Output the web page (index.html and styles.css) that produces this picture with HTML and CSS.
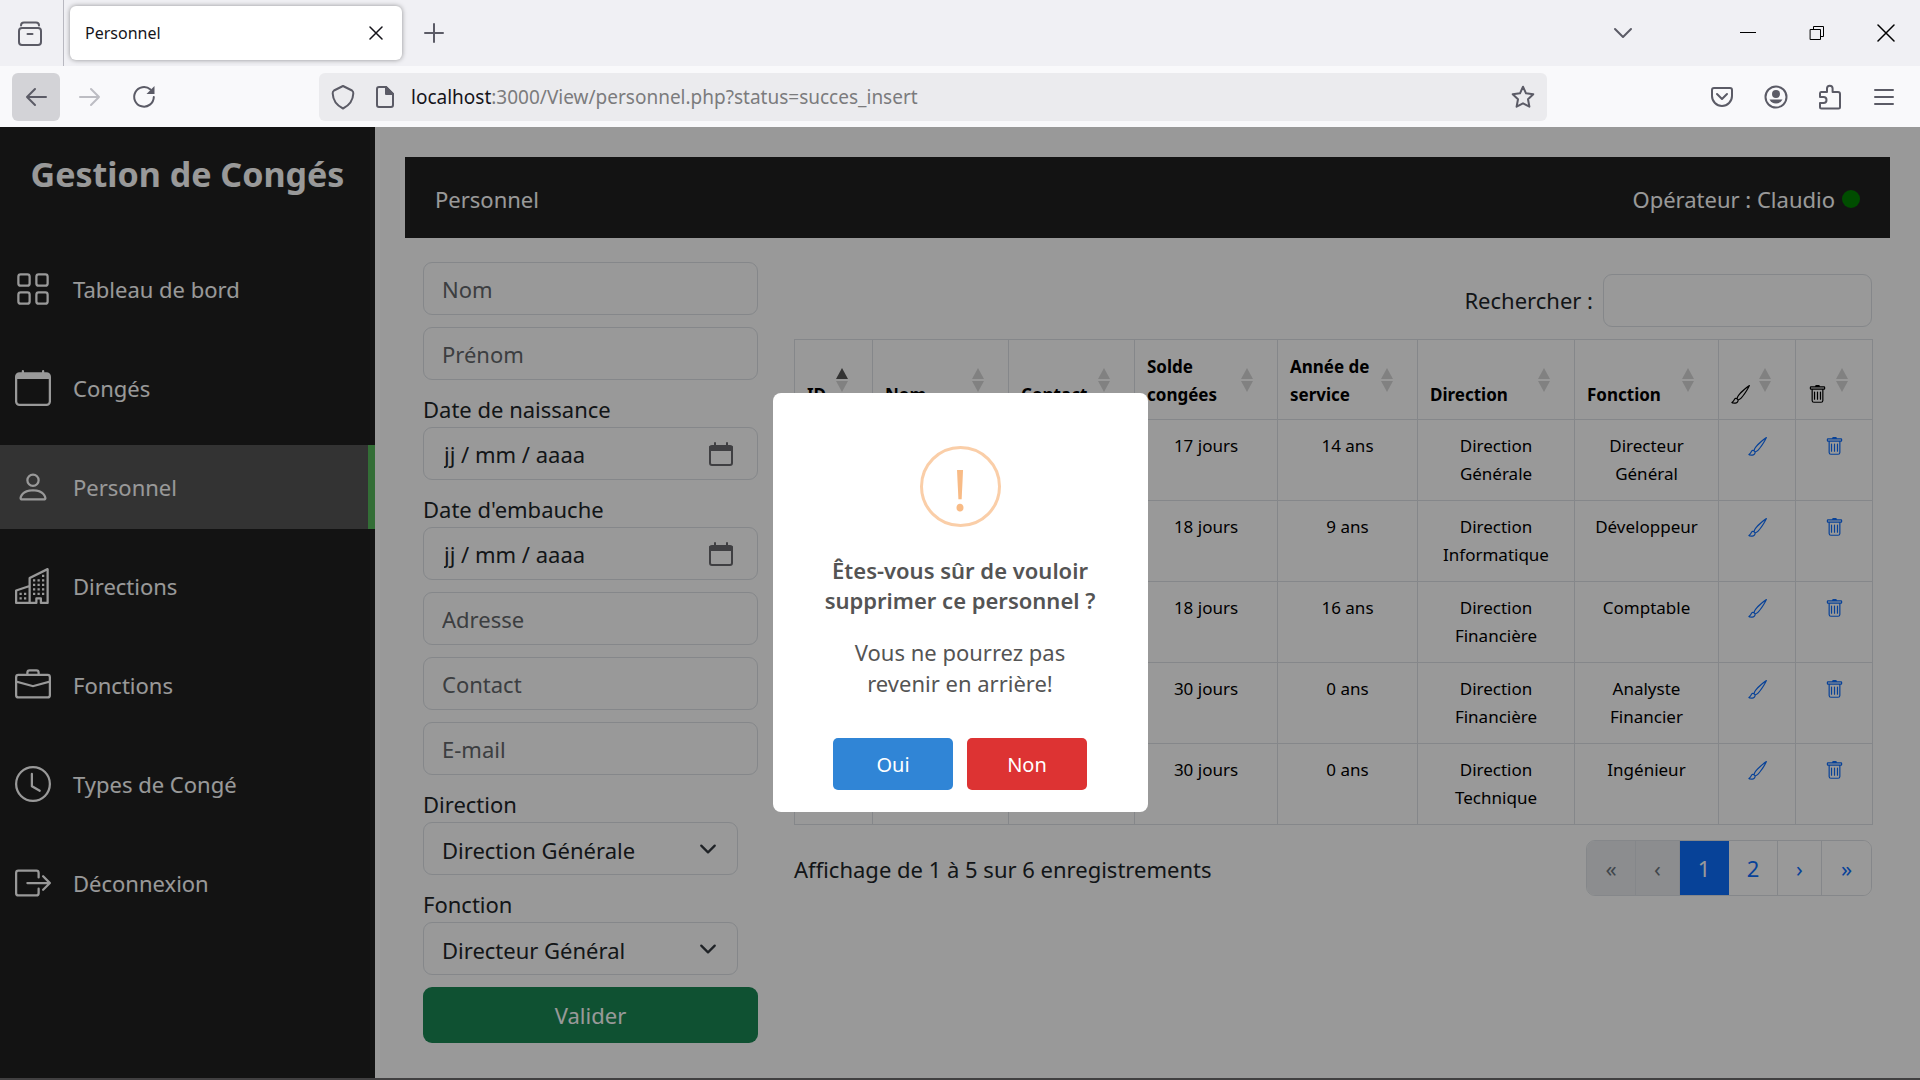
FILE: index.html
```html
<!DOCTYPE html>
<html lang="fr">
<head>
<meta charset="utf-8">
<meta name="viewport" content="width=device-width, initial-scale=1">
<title>Personnel</title>
<link rel="stylesheet" href="styles.css">
</head>
<body>
<svg class="sprite" aria-hidden="true">
  <symbol id="grid" viewBox="0 0 16 16"><path d="M1 2.5A1.5 1.5 0 0 1 2.5 1h3A1.5 1.5 0 0 1 7 2.5v3A1.5 1.5 0 0 1 5.5 7h-3A1.5 1.5 0 0 1 1 5.5zM2.5 2a.5.5 0 0 0-.5.5v3a.5.5 0 0 0 .5.5h3a.5.5 0 0 0 .5-.5v-3a.5.5 0 0 0-.5-.5zm6.5.5A1.5 1.5 0 0 1 10.5 1h3A1.5 1.5 0 0 1 15 2.5v3A1.5 1.5 0 0 1 13.5 7h-3A1.5 1.5 0 0 1 9 5.5zm1.5-.5a.5.5 0 0 0-.5.5v3a.5.5 0 0 0 .5.5h3a.5.5 0 0 0 .5-.5v-3a.5.5 0 0 0-.5-.5zM1 10.5A1.5 1.5 0 0 1 2.5 9h3A1.5 1.5 0 0 1 7 10.5v3A1.5 1.5 0 0 1 5.5 15h-3A1.5 1.5 0 0 1 1 13.5zm1.5-.5a.5.5 0 0 0-.5.5v3a.5.5 0 0 0 .5.5h3a.5.5 0 0 0 .5-.5v-3a.5.5 0 0 0-.5-.5zm6.5.5A1.5 1.5 0 0 1 10.5 9h3a1.5 1.5 0 0 1 1.5 1.5v3a1.5 1.5 0 0 1-1.5 1.5h-3A1.5 1.5 0 0 1 9 13.5zm1.5-.5a.5.5 0 0 0-.5.5v3a.5.5 0 0 0 .5.5h3a.5.5 0 0 0 .5-.5v-3a.5.5 0 0 0-.5-.5z"/></symbol>
  <symbol id="calendar" viewBox="0 0 16 16"><path d="M3.5 0a.5.5 0 0 1 .5.5V1h8V.5a.5.5 0 0 1 1 0V1h1a2 2 0 0 1 2 2v11a2 2 0 0 1-2 2H2a2 2 0 0 1-2-2V3a2 2 0 0 1 2-2h1V.5a.5.5 0 0 1 .5-.5M1 4v10a1 1 0 0 0 1 1h12a1 1 0 0 0 1-1V4z"/></symbol>
  <symbol id="person" viewBox="0 0 16 16"><path d="M8 8a3 3 0 1 0 0-6 3 3 0 0 0 0 6m2-3a2 2 0 1 1-4 0 2 2 0 0 1 4 0m4 8c0 1-1 1-1 1H3s-1 0-1-1 1-4 6-4 6 3 6 4m-1-.004c-.001-.246-.154-.986-.832-1.664C11.516 10.68 10.289 10 8 10s-3.516.68-4.168 1.332c-.678.678-.83 1.418-.832 1.664z"/></symbol>
  <symbol id="buildings" viewBox="0 0 16 16"><path d="M14.763.075A.5.5 0 0 1 15 .5v15a.5.5 0 0 1-.5.5h-3a.5.5 0 0 1-.5-.5V14h-1v1.500a.5.5 0 0 1-.5.5h-9a.5.5 0 0 1-.5-.5V10a.5.5 0 0 1 .342-.474L6 7.640V4.500a.5.5 0 0 1 .276-.447l8-4a.5.5 0 0 1 .487.022M6 8.694 1 10.360V15h5zM7 15h2v-1.500a.5.5 0 0 1 .5-.5h2a.5.5 0 0 1 .5.5V15h2V1.309l-7 3.500z"/><path d="M2 11h1v1H2zm2 0h1v1H4zm-2 2h1v1H2zm2 0h1v1H4zm4-4h1v1H8zm2 0h1v1h-1zm-2 2h1v1H8zm2 0h1v1h-1zm2-2h1v1h-1zm0 2h1v1h-1zM8 7h1v1H8zm2 0h1v1h-1zm2 0h1v1h-1zM8 5h1v1H8zm2 0h1v1h-1zm2 0h1v1h-1zm0-2h1v1h-1z"/></symbol>
  <symbol id="briefcase" viewBox="0 0 16 16"><path d="M6.500 1A1.500 1.500 0 0 0 5 2.500V3H1.500A1.500 1.500 0 0 0 0 4.500v8A1.500 1.500 0 0 0 1.500 14h13a1.500 1.500 0 0 0 1.500-1.500v-8A1.500 1.500 0 0 0 14.500 3H11v-.5A1.500 1.500 0 0 0 9.500 1zm0 1h3a.5.5 0 0 1 .5.5V3H6v-.5a.5.5 0 0 1 .5-.5m1.886 6.914L15 7.151V12.500a.5.5 0 0 1-.5.5h-13a.5.5 0 0 1-.5-.5V7.150l6.614 1.764a1.500 1.500 0 0 0 .772 0M1.500 4h13a.5.5 0 0 1 .5.5v1.616L8.129 7.948a.5.5 0 0 1-.258 0L1 6.116V4.500a.5.5 0 0 1 .5-.5"/></symbol>
  <symbol id="clock" viewBox="0 0 16 16"><path d="M8 3.500a.5.5 0 0 0-1 0V9a.5.5 0 0 0 .252.434l3.500 2a.5.5 0 0 0 .496-.868L8 8.710z"/><path d="M8 16A8 8 0 1 0 8 0a8 8 0 0 0 0 16m7-8A7 7 0 1 1 1 8a7 7 0 0 1 14 0"/></symbol>
  <symbol id="logout" viewBox="0 0 16 16"><path d="M10 12.500a.5.5 0 0 1-.5.5h-8a.5.5 0 0 1-.5-.5v-9a.5.5 0 0 1 .5-.5h8a.5.5 0 0 1 .5.5v2a.5.5 0 0 0 1 0v-2A1.500 1.500 0 0 0 9.500 2h-8A1.500 1.500 0 0 0 0 3.500v9A1.500 1.500 0 0 0 1.500 14h8a1.500 1.500 0 0 0 1.500-1.500v-2a.5.5 0 0 0-1 0z"/><path d="M15.854 8.354a.5.5 0 0 0 0-.708l-3-3a.5.5 0 0 0-.708.708L14.293 7.500H5.500a.5.5 0 0 0 0 1h8.793l-2.147 2.146a.5.5 0 0 0 .708.708z"/></symbol>
  <symbol id="brush" viewBox="0 0 16 16"><path d="M15.825.120a.5.5 0 0 1 .132.584c-1.530 3.430-4.743 8.170-7.095 10.640a6.100 6.100 0 0 1-2.373 1.534c-.018.227-.060.538-.160.868-.201.659-.667 1.479-1.708 1.740a8.100 8.100 0 0 1-3.078.132 4 4 0 0 1-.562-.135 1.400 1.400 0 0 1-.466-.247.700.700 0 0 1-.204-.288.620.620 0 0 1 .004-.443c.095-.245.316-.380.461-.452.394-.197.625-.453.867-.826.095-.144.184-.297.287-.472l.117-.198c.151-.255.326-.540.546-.848.528-.739 1.201-.925 1.746-.896q.190.012.348.048c.062-.172.142-.380.238-.608.261-.619.658-1.419 1.187-2.069 2.176-2.670 6.180-6.206 9.117-8.104a.5.5 0 0 1 .596.040M4.705 11.912a1.200 1.200 0 0 0-.419-.100c-.246-.013-.573.050-.879.479-.197.275-.355.532-.500.777l-.105.177c-.106.181-.213.362-.320.528a3.400 3.400 0 0 1-.760.861c.690.112 1.736.111 2.657-.120.559-.139.843-.569.993-1.060a3 3 0 0 0 .126-.750zm1.440.026c.120-.040.277-.100.458-.183a5.100 5.100 0 0 0 1.535-1.100c1.900-1.996 4.412-5.570 6.052-8.631-2.590 1.927-5.566 4.660-7.302 6.792-.442.543-.795 1.243-1.042 1.826-.121.288-.214.540-.275.720v.001l.575.575zm-4.973 3.040.007-.005zm3.582-3.043.002.001h-.002z"/></symbol>
  <symbol id="trash" viewBox="0 0 16 16"><path d="M5.500 5.500A.5.5 0 0 1 6 6v6a.5.5 0 0 1-1 0V6a.5.5 0 0 1 .5-.5m2.500 0a.5.5 0 0 1 .5.5v6a.5.5 0 0 1-1 0V6a.5.5 0 0 1 .5-.5m3 .5a.5.5 0 0 0-1 0v6a.5.5 0 0 0 1 0z"/><path d="M14.500 3a1 1 0 0 1-1 1H13v9a2 2 0 0 1-2 2H5a2 2 0 0 1-2-2V4h-.5a1 1 0 0 1-1-1V2a1 1 0 0 1 1-1H6a1 1 0 0 1 1-1h2a1 1 0 0 1 1 1h3.500a1 1 0 0 1 1 1zM4.118 4 4 4.059V13a1 1 0 0 0 1 1h6a1 1 0 0 0 1-1V4.059L11.882 4zM2.500 3h11V2h-11z"/></symbol>
  <symbol id="sort" viewBox="0 0 12 24"><path class="up" d="M6 0 12 11H0z"/><path class="down" d="M0 13h12L6 24z"/></symbol>
</svg>

<header class="browser">
  <div class="tabs">
    <button class="tool firefox-view" aria-label="Vue d'ensemble"><svg class="line" width="28" height="28" viewBox="0 0 28 28"><path d="M5 6.500q0-3 3-3h12q3 0 3 3"/><rect x="3" y="9" width="22" height="17" rx="3"/><path d="M11.500 15h5"/></svg></button>
    <div class="tab"><span>Personnel</span><button class="tool close" aria-label="Fermer l'onglet"><svg class="line dark" width="14" height="14" viewBox="0 0 14 14"><path d="M1 1l12 12M13 1 1 13"/></svg></button></div>
    <button class="tool new" aria-label="Nouvel onglet"><svg class="line" width="20" height="20" viewBox="0 0 20 20"><path d="M10 1v18M1 10h18"/></svg></button>
    <div class="window">
      <button class="tool" aria-label="Lister les onglets"><svg class="line" width="20" height="20" viewBox="0 0 20 20"><path d="m2 6 8 8 8-8"/></svg></button>
      <button class="tool minimise" aria-label="Réduire"><svg class="line thin" width="16" height="16" viewBox="0 0 16 16"><path d="M0 7.500h16"/></svg></button>
      <button class="tool" aria-label="Restaurer"><svg class="line thin" width="16" height="16" viewBox="0 0 16 16"><path d="M1.500 4.500h10v10h-10zM4.500 4V1.500h10v10H12"/></svg></button>
      <button class="tool" aria-label="Fermer"><svg class="line thin cross" width="18" height="18" viewBox="0 0 18 18"><path d="m1 1 16 16M17 1 1 17"/></svg></button>
    </div>
  </div>
  <div class="toolbar">
    <button class="tool back" aria-label="Précédent"><svg class="line" width="22" height="20" viewBox="0 0 22 20"><path d="M21 10H2M10 2l-8 8 8 8"/></svg></button>
    <button class="tool forward" aria-label="Suivant"><svg class="line" width="22" height="20" viewBox="0 0 22 20"><path d="M1 10h19M12 2l8 8-8 8"/></svg></button>
    <button class="tool reload" aria-label="Actualiser"><svg class="line" width="24" height="24" viewBox="0 0 24 24"><path d="M18.500 4.500A9.800 9.800 0 1 0 21.800 12"/><path class="solid" d="M22.500 1v8h-8z"/></svg></button>
    <div class="address">
      <svg class="line" width="24" height="26" viewBox="0 0 24 26"><path d="M12 2 21 6.500q1.500 1 1.300 3C22 17 17 22 12 24.500 7 22 2 17 1.700 9.500q-.2-2 1.300-3z"/></svg>
      <svg class="line page-icon" width="20" height="24" viewBox="0 0 20 24"><path d="M11 2H4Q2 2 2 4v16q0 2 2 2h12q2 0 2-2V9z"/><path class="fill" d="M11 2l7 7h-7z"/></svg>
      <p class="url"><b>localhost</b>:3000/View/personnel.php?status=succes_insert</p>
      <button class="tool" aria-label="Marquer cette page"><svg class="line" width="24" height="24" viewBox="0 0 24 24"><path d="m12 1.700 3 6.600 7.300.9-5.300 5 1.400 7.500L12 18.300 5.600 21.700 7 14.200l-5.300-5 7.300-.9z"/></svg></button>
    </div>
    <div class="extras">
      <button class="tool" aria-label="Pocket"><svg class="line" width="24" height="24" viewBox="0 0 24 24"><path d="M4 3h16q2 0 2 2v6a10 10 0 0 1-20 0V5q0-2 2-2z"/><path d="m7 9 5 5 5-5"/></svg></button>
      <button class="tool" aria-label="Compte"><svg class="line" width="24" height="24" viewBox="0 0 24 24"><circle cx="12" cy="12" r="10.500"/><circle class="fill" cx="12" cy="9" r="3"/><path class="solid" d="M5.500 14.500h13q-2 4-6.500 4t-6.500-4z"/></svg></button>
      <button class="tool" aria-label="Extensions"><svg class="line" width="24" height="26" viewBox="0 0 24 26"><path d="M3 8h6V4.500a2.800 2.800 0 0 1 5.600 0V8H20q2 0 2 2v13q0 1.500-1.500 1.500H3.500Q2 24.500 2 23v-4h3.500a3 3 0 0 0 0-6H2V9.500Q2 8 3 8z"/></svg></button>
      <button class="tool" aria-label="Menu"><svg class="line" width="20" height="20" viewBox="0 0 20 20"><path d="M1 3h18M1 10h18M1 17h18"/></svg></button>
    </div>
  </div>
</header>

<div class="page">
  <aside class="sidebar">
    <h1>Gestion de Congés</h1>
    <nav>
      <a href="#"><svg class="icon"><use href="#grid"/></svg>Tableau de bord</a>
      <a href="#"><svg class="icon"><use href="#calendar"/></svg>Congés</a>
      <a href="#" class="active" aria-current="page"><svg class="icon"><use href="#person"/></svg>Personnel</a>
      <a href="#"><svg class="icon"><use href="#buildings"/></svg>Directions</a>
      <a href="#"><svg class="icon"><use href="#briefcase"/></svg>Fonctions</a>
      <a href="#"><svg class="icon"><use href="#clock"/></svg>Types de Congé</a>
      <a href="#"><svg class="icon"><use href="#logout"/></svg>Déconnexion</a>
    </nav>
  </aside>

  <main>
    <div class="banner"><h2>Personnel</h2><p class="operator">Opérateur : Claudio<span class="status"></span></p></div>
    <div class="content">
      <form>
        <input class="control" type="text" placeholder="Nom" aria-label="Nom">
        <input class="control" type="text" placeholder="Prénom" aria-label="Prénom">
        <div class="field">
          <label for="naissance">Date de naissance</label>
          <div class="control date"><input id="naissance" type="text" value="jj / mm / aaaa"><button type="button" class="tool" aria-label="Choisir la date de naissance"><svg class="line" width="24" height="24" viewBox="0 0 24 24"><rect x="1" y="4" width="22" height="19" rx="2"/><path class="fill" d="M1 5h22v3H1z"/><path d="M6 1v4M18 1v4"/></svg></button></div>
        </div>
        <div class="field">
          <label for="embauche">Date d'embauche</label>
          <div class="control date"><input id="embauche" type="text" value="jj / mm / aaaa"><button type="button" class="tool" aria-label="Choisir la date d'embauche"><svg class="line" width="24" height="24" viewBox="0 0 24 24"><rect x="1" y="4" width="22" height="19" rx="2"/><path class="fill" d="M1 5h22v3H1z"/><path d="M6 1v4M18 1v4"/></svg></button></div>
        </div>
        <input class="control" type="text" placeholder="Adresse" aria-label="Adresse">
        <input class="control" type="text" placeholder="Contact" aria-label="Contact">
        <input class="control" type="email" placeholder="E-mail" aria-label="E-mail">
        <div class="field">
          <label for="direction">Direction</label>
          <select class="control" id="direction"><option>Direction Générale</option></select>
        </div>
        <div class="field">
          <label for="fonction">Fonction</label>
          <select class="control" id="fonction"><option>Directeur Général</option></select>
        </div>
        <button class="submit" type="button">Valider</button>
      </form>

      <section class="listing">
        <div class="search"><label for="recherche">Rechercher :</label><input class="control" id="recherche" type="search"></div>
        <table>
          <colgroup><col class="c-id"><col class="c-nom"><col class="c-contact"><col class="c-solde"><col class="c-annee"><col class="c-direction"><col class="c-fonction"><col class="c-action"><col class="c-action"></colgroup>
          <thead>
            <tr>
              <th><div>ID<svg class="sort asc"><use href="#sort"/></svg></div></th>
              <th><div>Nom<svg class="sort"><use href="#sort"/></svg></div></th>
              <th><div>Contact<svg class="sort"><use href="#sort"/></svg></div></th>
              <th><div>Solde<br>congées<svg class="sort"><use href="#sort"/></svg></div></th>
              <th><div>Année de<br>service<svg class="sort"><use href="#sort"/></svg></div></th>
              <th><div>Direction<svg class="sort"><use href="#sort"/></svg></div></th>
              <th><div>Fonction<svg class="sort"><use href="#sort"/></svg></div></th>
              <th><div><svg class="glyph"><use href="#brush"/></svg><svg class="sort"><use href="#sort"/></svg></div></th>
              <th><div><svg class="glyph"><use href="#trash"/></svg><svg class="sort"><use href="#sort"/></svg></div></th>
            </tr>
          </thead>
          <tbody>
            <tr><td></td><td></td><td></td><td>17 jours</td><td>14 ans</td><td>Direction Générale</td><td>Directeur Général</td><td><a href="#" aria-label="Modifier"><svg class="glyph"><use href="#brush"/></svg></a></td><td><a href="#" aria-label="Supprimer"><svg class="glyph"><use href="#trash"/></svg></a></td></tr>
            <tr><td></td><td></td><td></td><td>18 jours</td><td>9 ans</td><td>Direction Informatique</td><td>Développeur</td><td><a href="#" aria-label="Modifier"><svg class="glyph"><use href="#brush"/></svg></a></td><td><a href="#" aria-label="Supprimer"><svg class="glyph"><use href="#trash"/></svg></a></td></tr>
            <tr><td></td><td></td><td></td><td>18 jours</td><td>16 ans</td><td>Direction Financière</td><td>Comptable</td><td><a href="#" aria-label="Modifier"><svg class="glyph"><use href="#brush"/></svg></a></td><td><a href="#" aria-label="Supprimer"><svg class="glyph"><use href="#trash"/></svg></a></td></tr>
            <tr><td></td><td></td><td></td><td>30 jours</td><td>0 ans</td><td>Direction Financière</td><td>Analyste Financier</td><td><a href="#" aria-label="Modifier"><svg class="glyph"><use href="#brush"/></svg></a></td><td><a href="#" aria-label="Supprimer"><svg class="glyph"><use href="#trash"/></svg></a></td></tr>
            <tr><td></td><td></td><td></td><td>30 jours</td><td>0 ans</td><td>Direction Technique</td><td>Ingénieur</td><td><a href="#" aria-label="Modifier"><svg class="glyph"><use href="#brush"/></svg></a></td><td><a href="#" aria-label="Supprimer"><svg class="glyph"><use href="#trash"/></svg></a></td></tr>
          </tbody>
        </table>
        <div class="table-footer">
          <p>Affichage de 1 à 5 sur 6 enregistrements</p>
          <div class="pagination">
            <button disabled>«</button><button class="step" disabled>‹</button><button class="current">1</button><button>2</button><button class="step">›</button><button>»</button>
          </div>
        </div>
      </section>
    </div>
  </main>

  <div class="overlay">
    <div class="modal" role="dialog" aria-modal="true" aria-labelledby="modal-title">
      <div class="warning">!</div>
      <h2 id="modal-title">Êtes-vous sûr de vouloir supprimer ce personnel ?</h2>
      <p>Vous ne pourrez pas revenir en arrière!</p>
      <div class="actions"><button class="yes">Oui</button><button class="no">Non</button></div>
    </div>
  </div>
</div>
<div class="taskbar"></div>
</body>
</html>
```
FILE: styles.css
```css
* { box-sizing: border-box; }

body {
  margin: 0;
  min-height: 100vh;
  display: flex;
  flex-direction: column;
  font-family: "Noto Sans", "Open Sans", sans-serif;
  font-size: 22px;
  line-height: 36px;
  color: #212529;
}

h1, h2, p { margin: 0; font-weight: 400; }
h2 { font-size: inherit; }
a { text-decoration: none; color: inherit; }
button, input, select { font: inherit; color: inherit; }
svg { flex: none; display: block; fill: currentColor; }
.sprite { position: absolute; width: 0; height: 0; }

.tool {
  display: grid;
  place-items: center;
  padding: 0;
  border: 0;
  background: none;
  color: #5b5b66;
}
.line { fill: none; stroke: currentColor; stroke-width: 2; stroke-linecap: round; stroke-linejoin: round; }
.line .fill { fill: currentColor; }
.line .solid { fill: currentColor; stroke: none; }
.dark { color: #15141a; }
.thin { color: #000; stroke-width: 1; }
.close .line, .cross { stroke-width: 1.500; }

/* Browser chrome */
.tabs { display: flex; align-items: center; height: 66px; background: #f0f0f4; }
.firefox-view { width: 64px; height: 66px; padding-right: 3px; border-right: 1px solid #b8b8c0; }
.tab {
  display: flex;
  align-items: center;
  justify-content: space-between;
  width: 332px;
  height: 54px;
  margin-left: 6px;
  padding: 0 19px 0 15px;
  border-radius: 6px;
  background: #fff;
  box-shadow: 0 0 5px rgba(0, 0, 0, .4);
  font-size: 16px;
  line-height: 24px;
  color: #15141a;
}
.new { width: 64px; height: 48px; }
.window { display: flex; margin-left: auto; }
.window .tool { width: 69px; height: 66px; }
.window .minimise { margin-left: 56px; }

.toolbar { display: flex; align-items: center; height: 61px; padding: 0 12px; background: #f9f9fb; }
.back, .forward, .reload { width: 48px; height: 48px; border-radius: 6px; }
.back { background: #d3d3d7; }
.forward { margin-left: 6px; color: #bdbdc3; }
.reload { margin-left: 6px; }
.address {
  flex: 1;
  display: flex;
  align-items: center;
  height: 48px;
  margin: 0 163px 0 151px;
  padding: 0 12px;
  border-radius: 6px;
  background: #ebebee;
  color: #5b5b66;
}
.page-icon { margin-left: 20px; }
.url { flex: 1; margin-left: 16px; font-size: 19px; color: #7b7b7d; }
.url b { font-weight: 400; color: #15141a; }
.extras { display: flex; gap: 30px; padding-right: 12px; }
.extras .tool { width: 24px; }

/* Application */
.page { position: relative; flex: 1; display: flex; background: #fff; }
.sidebar { width: 375px; background: #212121; color: #fff; }
.sidebar h1 {
  padding: 24px 0;
  font-size: 34px;
  font-weight: 700;
  line-height: 46px;
  text-align: center;
}
.sidebar nav { display: grid; gap: 15px; padding-top: 26px; }
.sidebar a { display: flex; align-items: center; gap: 22px; height: 84px; padding-left: 15px; }
.sidebar .active { background: #555; border-right: 7px solid #55b75a; }
.icon { width: 36px; height: 36px; }

main { flex: 1; min-width: 0; padding: 30px; }
.banner {
  display: flex;
  align-items: center;
  justify-content: space-between;
  height: 81px;
  padding: 2px 30px 0;
  background: #212121;
  color: #fff;
}
.operator { display: flex; align-items: center; gap: 7px; }
.status { width: 18px; height: 18px; border-radius: 50%; background: #008000; }

.content { display: flex; gap: 36px; padding: 24px 18px 0; }
form { display: grid; grid-template-columns: 100%; gap: 12px; width: 335px; flex: none; align-content: start; }
.field { display: grid; grid-template-columns: 100%; }
label { line-height: 35px; }
.control {
  width: 100%;
  height: 53px;
  padding: 4px 18px;
  border: 1px solid #dee2e6;
  border-radius: 9px;
  background: #fff;
}
.control::placeholder { color: #64686c; opacity: 1; }
.date { display: flex; align-items: center; padding: 0 24px 0 20px; }
.date input { flex: 1; min-width: 0; padding: 0; border: 0; background: none; }
.date .tool { color: #6a6a6e; }
select.control {
  width: 315px;
  padding: 6px 18px 4px;
  appearance: none;
  background: #fff url("data:image/svg+xml,%3Csvg xmlns='http://www.w3.org/2000/svg' viewBox='0 0 16 16'%3E%3Cpath fill='none' stroke='%23343a40' stroke-linecap='round' stroke-linejoin='round' stroke-width='2' d='m2 5 6 6 6-6'/%3E%3C/svg%3E") no-repeat right 20px center / 18px 18px;
}
.submit { height: 56px; border: 0; border-radius: 9px; background: #198754; color: #fff; }

.listing { flex: 1; min-width: 0; padding-top: 12px; }
.search { display: flex; align-items: center; justify-content: flex-end; gap: 10px; margin-bottom: 12px; }
.search .control { width: 269px; }

table {
  width: 100%;
  table-layout: fixed;
  border-collapse: collapse;
  font-size: 17px;
  line-height: 28px;
  color: #000;
}
.c-id { width: 78px; }
.c-nom { width: 136px; }
.c-contact { width: 126px; }
.c-solde { width: 143px; }
.c-annee { width: 140px; }
.c-direction { width: 157px; }
.c-fonction { width: 144px; }
.c-action { width: 77px; }
th, td { height: 81px; padding: 12px; border: 1px solid #dee2e6; }
th { height: 80px; padding: 13px 12px 10px; text-align: left; vertical-align: bottom; }
th div { display: flex; align-items: flex-end; justify-content: space-between; min-height: 56px; padding-right: 12px; }
td { text-align: center; vertical-align: top; }
td a { display: grid; place-items: center; height: 28px; color: #0d6efd; }
.glyph { width: 19px; height: 19px; }
th .glyph { margin-bottom: 5px; }
.sort { width: 12px; height: 24px; margin-bottom: 17px; color: #d8d8d8; }
.asc { --up: #555; }
.up { fill: var(--up, currentColor); }

.table-footer { display: flex; align-items: flex-start; justify-content: space-between; padding-top: 15px; }
.table-footer p { padding-top: 11px; }
.pagination { display: flex; border: 1px solid #dee2e6; border-radius: 9px; overflow: hidden; }
.pagination button {
  width: 49px;
  height: 54px;
  padding: 0;
  border: 0;
  border-right: 1px solid #dee2e6;
  background: #fff;
  color: #0d6efd;
}
.pagination .step { width: 44px; }
.pagination button:last-child { border-right: 0; }
.pagination button:disabled { background: #e9ecef; color: #6c757d; }
.pagination .current { background: #0d6efd; border-color: #0d6efd; color: #fff; }

/* Confirmation dialog */
.overlay { position: absolute; inset: 0; display: grid; place-items: center; background: rgba(0, 0, 0, .4); }
.modal {
  width: 375px;
  padding: 53px 30px 22px;
  border-radius: 8px;
  background: #fff;
  text-align: center;
  color: #545454;
}
.warning {
  width: 81px;
  height: 81px;
  margin: 0 auto 28px;
  border: 3px solid #facea8;
  border-radius: 50%;
  font-size: 56px;
  line-height: 81px;
  color: #f8bb86;
}
.modal h2 { padding: 0 15px; font-weight: 600; line-height: 30px; }
.modal p { padding: 22px 30px 0; line-height: 31px; }
.actions { display: flex; justify-content: center; gap: 14px; margin-top: 39px; }
.actions button { width: 120px; height: 52px; padding: 2px 0 0; border: 0; border-radius: 5px; color: #fff; font-size: 20px; }
.yes { background: #3085d6; }
.no { background: #d33; }

.taskbar { height: 2px; background: #414041; }
```
